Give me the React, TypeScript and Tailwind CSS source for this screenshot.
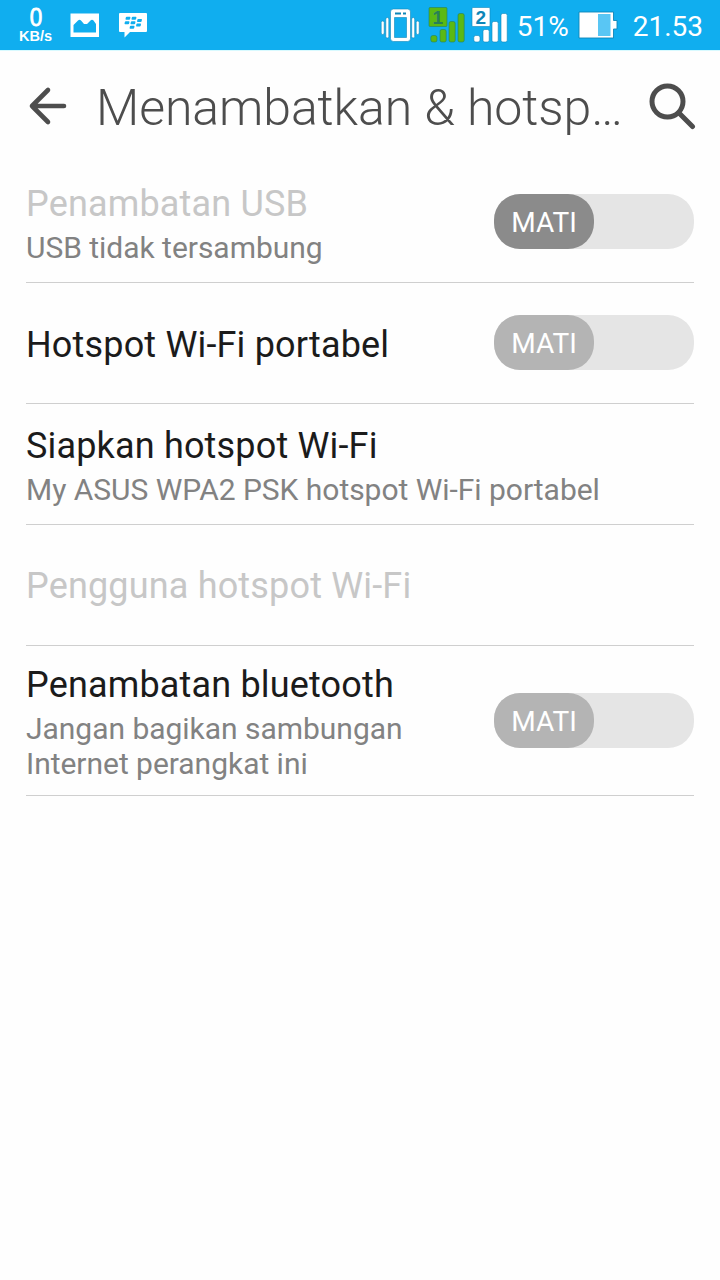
import React from "react";

type Setting = {
  title: string;
  summary?: string;
  disabled?: boolean;
  toggle?: "dark" | "light";
  tall?: boolean;
};

const settings: Setting[] = [
  { title: "Penambatan USB", summary: "USB tidak tersambung", disabled: true, toggle: "dark" },
  { title: "Hotspot Wi-Fi portabel", toggle: "light" },
  { title: "Siapkan hotspot Wi-Fi", summary: "My ASUS WPA2 PSK hotspot Wi-Fi portabel" },
  { title: "Pengguna hotspot Wi-Fi", disabled: true },
  {
    title: "Penambatan bluetooth",
    summary: "Jangan bagikan sambungan Internet perangkat ini",
    toggle: "light",
    tall: true,
  },
];

function PictureIcon() {
  return (
    <svg className="ml-[16px] h-[25px] w-[30px]" viewBox="0 0 30 25">
      <path
        fill="#fff"
        fillRule="evenodd"
        d="M0.500 0.500h28.500v23.500H0.500zM3.500 19.500h22.500v-8.500l-2.500-3.500q-1.500-1.500-3 0l-3.500 3.500h-3l-3-3.500q-1.500-1.500-3 0l-4.500 4.500z"
      />
    </svg>
  );
}

function MessengerIcon() {
  return (
    <svg className="ml-[18px] h-[26px] w-[29px]" viewBox="0 0 29 26">
      <path fill="#fff" d="M2 1h26q1 0 1 1v17q0 1-1 1H12l-5.500 5.500v-5.500H2q-1 0-1-1V2q0-1 1-1z" />
      <g fill="#10aeef" transform="skewX(-12)">
        <rect x="9" y="4.800" width="4.600" height="3" rx="0.800" />
        <rect x="15" y="4.800" width="4.600" height="3" rx="0.800" />
        <rect x="9" y="9.300" width="4.600" height="3" rx="0.800" />
        <rect x="15" y="9.300" width="4.600" height="3" rx="0.800" />
        <rect x="21" y="7" width="4.600" height="3" rx="0.800" />
        <rect x="15" y="13.800" width="4.600" height="3" rx="0.800" />
        <rect x="21" y="11.500" width="4.600" height="3" rx="0.800" />
      </g>
    </svg>
  );
}

function VibrateIcon() {
  return (
    <svg className="h-[36px] w-[40px]" viewBox="0 0 40 36">
      <g fill="#fff" stroke="#0d86b8" strokeWidth="0.6">
        <rect x="1.200" y="14" width="3" height="13.500" rx="1.500" />
        <rect x="5.800" y="10.500" width="3" height="20.500" rx="1.500" />
        <rect x="31.700" y="10.500" width="3" height="20.500" rx="1.500" />
        <rect x="36.200" y="14" width="3" height="13.500" rx="1.500" />
        <path
          fillRule="evenodd"
          d="M13.500 2h14q3 0 3 3v26.500q0 3-3 3h-14q-3 0-3-3V5q0-3 3-3zM14.500 10.500h12v20h-12z"
        />
      </g>
      <path stroke="#0d86b8" strokeWidth="2" d="M15 6.500h6M23 6.500h3" />
    </svg>
  );
}

function SignalIcon({ sim, color, edge }: { sim: string; color: string; edge: string }) {
  return (
    <svg className="h-[38px] w-[38px]" viewBox="0 0 38 38">
      <g fill={color} stroke={edge} strokeWidth="0.6">
        <rect x="1" y="1.500" width="18" height="19" rx="1" />
        <rect x="2.800" y="29.500" width="6.200" height="6.500" rx="2" />
        <rect x="12" y="23.500" width="6.200" height="12.500" rx="1.800" />
        <rect x="21" y="15.500" width="6.200" height="20.500" rx="1.800" />
        <rect x="30" y="7.500" width="6.200" height="28.500" rx="1.800" />
      </g>
      <text
        x="9.800"
        y="17.500"
        textAnchor="middle"
        fill={edge}
        className="font-['Liberation_Sans',sans-serif] text-[19px] font-bold"
      >
        {sim}
      </text>
    </svg>
  );
}

function BatteryIcon() {
  return (
    <svg className="h-[28px] w-[40px]" viewBox="0 0 40 28">
      <path
        d="M1 1h34.500v8.500h3.500v8.500h-3.500V27H1z"
        fill="#fff"
        stroke="#0d86b8"
        strokeWidth="0.900"
      />
      <rect x="20" y="3" width="12.500" height="22" fill="#59c6f4" />
    </svg>
  );
}

function StatusBar() {
  return (
    <header className="flex h-[50px] items-center bg-[#10aeef] text-white">
      <div className="ml-[17px] flex w-[37px] flex-col items-center pt-[1px] font-['Liberation_Sans',sans-serif]">
        <span className="h-[20px] scale-x-90 text-[25px] leading-[18px] [-webkit-text-stroke:0.8px_white]">0</span>
        <span className="h-[15px] text-[14.500px] leading-[17px] font-bold">KB/s</span>
      </div>
      <PictureIcon />
      <MessengerIcon />
      <div className="ml-auto flex items-center">
        <VibrateIcon />
        <div className="ml-[8px] flex gap-[5px]">
          <SignalIcon sim="1" color="#5bb914" edge="#277f58" />
          <SignalIcon sim="2" color="#ffffff" edge="#0d86b8" />
        </div>
        <span className="ml-[8px] w-[61px] pt-[2px] text-[28px] leading-[33px] whitespace-nowrap">51%</span>
        <BatteryIcon />
        <span className="mr-[17px] ml-[15px] pt-[2px] text-[28px] leading-[33px]">21.53</span>
      </div>
    </header>
  );
}

function TitleBar() {
  return (
    <div className="flex h-[112px] items-center border-t border-[#d8faff] pb-[1px] text-[#4d4d4d]">
      <button aria-label="Kembali" className="ml-[28px] h-[40px] w-[40px] shrink-0">
        <svg viewBox="0 0 40 40" fill="none" stroke="#4d4d4d" strokeWidth="4.600" strokeLinecap="round" strokeLinejoin="round">
          <path d="M20 4L4 20l16 16M4 20h32" />
        </svg>
      </button>
      <h1 className="ml-[28px] w-[530px] pt-[3px] text-[50px] leading-[60px] font-light tracking-[-0.1px] whitespace-nowrap">
        Menambatkan &amp; hotsp…
      </h1>
      <button aria-label="Cari" className="ml-[22px] h-[48px] w-[48px] shrink-0">
        <svg viewBox="0 0 48 48" fill="none" stroke="#4d4d4d" strokeWidth="5" strokeLinecap="round">
          <circle cx="19.500" cy="19.500" r="15.500" />
          <path d="M31 31l13.500 13.500" />
        </svg>
      </button>
    </div>
  );
}

function Toggle({ tone }: { tone: "dark" | "light" }) {
  return (
    <button role="switch" aria-checked="false" className="mb-[1px] flex h-[55px] w-[200px] shrink-0 rounded-[26px] bg-[#e5e5e5]">
      <span
        className={`flex h-full w-[100px] items-center justify-center rounded-[26px] pt-[2px] text-[28px] leading-[33px] text-white ${
          tone === "dark" ? "bg-[#8b8b8b]" : "bg-[#b4b4b4]"
        }`}
      >
        MATI
      </span>
    </button>
  );
}

function SettingRow({ item }: { item: Setting }) {
  return (
    <li
      className={`flex items-center justify-between border-b border-[#cfcfcf] ${
        item.tall ? "h-[150px]" : "h-[121px]"
      }`}
    >
      <div className={`${item.toggle ? "w-[430px]" : "w-full"} ${item.summary ? "pt-[4px]" : item.toggle ? "pt-[4px]" : "pt-[2px]"}`}>
        <div
          className={`text-[36px] leading-[42px] tracking-[0.170px] ${
            item.disabled ? "text-[#c7c7c7]" : "text-[#1b1b1b]"
          }`}
        >
          {item.title}
        </div>
        {item.summary && (
          <div className="mt-[5px] text-[30px] leading-[35px] tracking-[-0.030px] text-[#828282]">{item.summary}</div>
        )}
      </div>
      {item.toggle && <Toggle tone={item.toggle} />}
    </li>
  );
}

export default function App() {
  return (
    <div className="min-h-[1280px] w-[720px] overflow-hidden bg-[#fefefe] font-['Roboto',sans-serif]">
      <StatusBar />
      <TitleBar />
      <ul className="px-[26px]">
        {settings.map((item) => (
          <SettingRow key={item.title} item={item} />
        ))}
      </ul>
    </div>
  );
}
